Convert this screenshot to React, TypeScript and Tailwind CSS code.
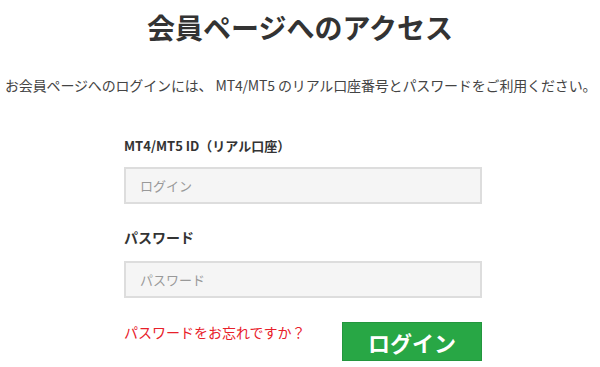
import React from "react";

export default function App() {
  const font = { fontFamily: '"Noto Sans CJK JP", "Noto Sans", sans-serif' };
  return (
    <div className="w-[600px] h-[367px] bg-white overflow-hidden text-[#333]" style={font}>
      <h1 className="text-center text-[28px] leading-[40px] font-bold pt-[7px] text-[#333]">
        会員ページへのアクセス
      </h1>
      <p className="mt-[28px] text-[14px] leading-[20px] text-[#444] pl-[5px] whitespace-nowrap tracking-[-0.15px]">
        お会員ページへのログインには、 MT4/MT5 のリアル口座番号とパスワードをご利用ください。
      </p>
      <div className="ml-[124px] w-[358px] mt-[42px] flex flex-col">
        <label className="text-[13px] leading-[18px] font-bold text-[#333]">MT4/MT5 ID（リアル口座）</label>
        <div className="mt-[12px] h-[37px] bg-[#f5f5f5] border-2 border-[#ddd] flex items-center pl-[14px] text-[13px] text-[#999]">
          ログイン
        </div>
        <label className="mt-[24px] text-[14px] leading-[18px] font-bold text-[#333]">パスワード</label>
        <div className="mt-[15px] h-[37px] bg-[#f5f5f5] border-2 border-[#ddd] flex items-center pl-[14px] text-[13px] text-[#999]">
          パスワード
        </div>
        <div className="mt-[24px] flex items-start justify-between">
          <span className="mt-[1px] text-[14px] leading-[18px] text-[#e8202a]">パスワードをお忘れですか？</span>
          <button className="w-[140px] h-[39px] bg-[#28a745] border border-[#23963e] text-white text-[22px] font-bold leading-none flex items-center justify-center">
            ログイン
          </button>
        </div>
      </div>
    </div>
  );
}
